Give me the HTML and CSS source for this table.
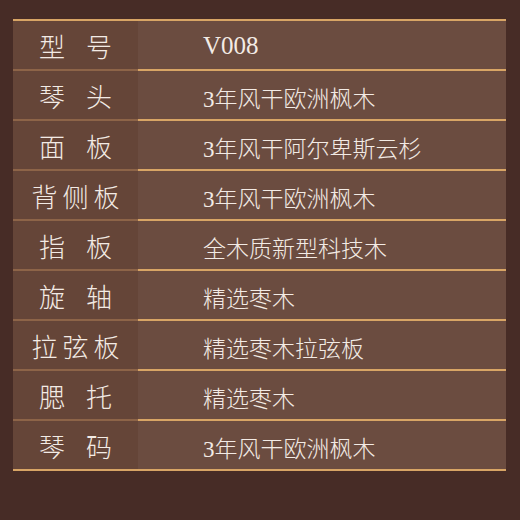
FILE: index.html
```html
<!DOCTYPE html>
<html lang="zh-CN">
<head>
<meta charset="utf-8">
<title>规格参数</title>
<link rel="stylesheet" href="styles.css">
</head>
<body>
<div class="spec">
  <div class="row"><div class="key k2">型号</div><div class="val latin">V008</div></div>
  <div class="row"><div class="key k2">琴头</div><div class="val">3年风干欧洲枫木</div></div>
  <div class="row"><div class="key k2">面板</div><div class="val">3年风干阿尔卑斯云杉</div></div>
  <div class="row"><div class="key k3">背侧板</div><div class="val">3年风干欧洲枫木</div></div>
  <div class="row"><div class="key k2">指板</div><div class="val">全木质新型科技木</div></div>
  <div class="row"><div class="key k2">旋轴</div><div class="val">精选枣木</div></div>
  <div class="row"><div class="key k3">拉弦板</div><div class="val">精选枣木拉弦板</div></div>
  <div class="row"><div class="key k2">腮托</div><div class="val">精选枣木</div></div>
  <div class="row last"><div class="key k2">琴码</div><div class="val">3年风干欧洲枫木</div></div>
</div>
</body>
</html>
```
FILE: styles.css
```css
html, body {
  margin: 0;
  padding: 0;
}
body {
  background: #472c26;
  width: 520px;
  height: 520px;
  font-family: "Liberation Serif", "Noto Sans CJK SC", serif;
  color: #f3ebe5;
}
.spec {
  margin: 19px 0 0 13px;
  width: 493px;
  border-top: 2px solid #d8a565;
}
.row {
  display: grid;
  grid-template-columns: 125px 1fr;
  height: 50px;
}
.key, .val {
  display: flex;
  align-items: center;
  box-sizing: border-box;
  font-weight: 300;
}
.key {
  background: #654538;
  border-bottom: 2px solid #8d6448;
  justify-content: center;
  font-size: 26px;
  font-family: "Noto Sans CJK SC", sans-serif;
  font-weight: 300;
  padding-top: 1px;
}
.k2 {
  letter-spacing: 21px;
  text-indent: 21px;
}
.k3 {
  letter-spacing: 5px;
  text-indent: 5px;
}
.val {
  background: #6b4c40;
  border-bottom: 2px solid #d8a565;
  padding-left: 65px;
  padding-top: 3px;
  font-size: 23px;
  font-family: "Liberation Serif", "Noto Sans CJK SC", serif;
}
.latin {
  font-size: 25px;
  padding-top: 2px;
}
.last .key {
  border-bottom-color: #d8a565;
}
```
